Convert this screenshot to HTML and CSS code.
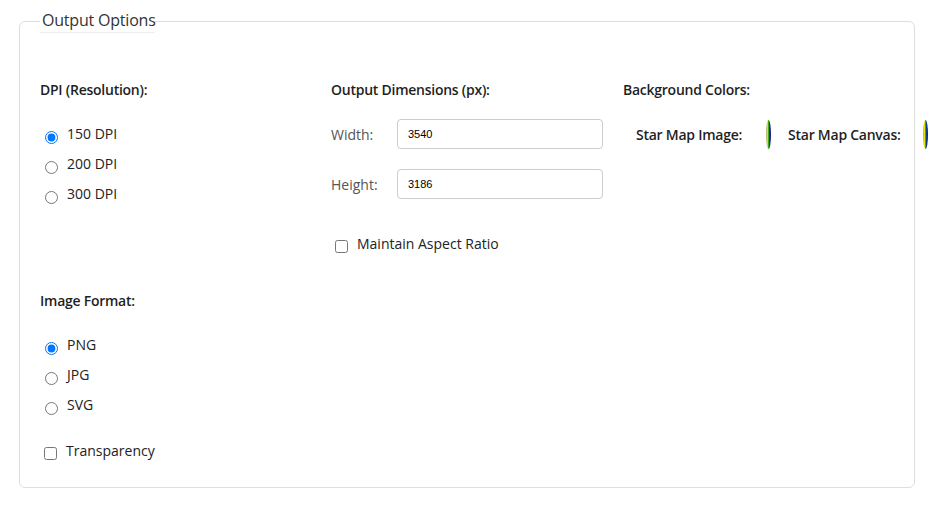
FILE: index.html
```html
<!DOCTYPE html>
<html>
<head>
<meta charset="utf-8">
<link rel="stylesheet" href="styles.css">
</head>
<body>
<div class="page">
  <fieldset class="options">
    <legend class="legend">Output Options</legend>
    <div class="cols">
      <div class="col">
        <div class="section">
          <div class="heading">DPI (Resolution):</div>
          <label class="opt"><input type="radio" name="dpi" class="radio" checked>150 DPI</label>
          <label class="opt"><input type="radio" name="dpi" class="radio">200 DPI</label>
          <label class="opt"><input type="radio" name="dpi" class="radio">300 DPI</label>
        </div>
        <div class="section format">
          <div class="heading">Image Format:</div>
          <label class="opt"><input type="radio" name="fmt" class="radio" checked>PNG</label>
          <label class="opt"><input type="radio" name="fmt" class="radio">JPG</label>
          <label class="opt"><input type="radio" name="fmt" class="radio">SVG</label>
          <label class="opt transp"><input type="checkbox" class="check">Transparency</label>
        </div>
      </div>
      <div class="col">
        <div class="heading">Output Dimensions (px):</div>
        <div class="dim first">
          <span class="dim-label">Width:</span>
          <input class="dim-input" type="text" value="3540">
        </div>
        <div class="dim">
          <span class="dim-label">Height:</span>
          <input class="dim-input" type="text" value="3186">
        </div>
        <label class="opt aspect"><input type="checkbox" class="check">Maintain Aspect Ratio</label>
      </div>
      <div class="col">
        <div class="heading">Background Colors:</div>
        <div class="colors">
          <span class="color-label">Star Map Image:</span>
          <span class="swatch"></span>
          <span class="color-label second">Star Map Canvas:</span>
          <span class="swatch"></span>
        </div>
      </div>
    </div>
  </fieldset>
</div>
</body>
</html>
```
FILE: styles.css
```css
html, body {
  margin: 0;
  padding: 0;
  background: #fff;
}
body {
  font-family: "Open Sans", "DejaVu Sans", sans-serif;
  font-size: 14px;
  color: #222;
}
.page {
  padding: 10px 0 0 19px;
  width: 896px;
}
.options {
  margin: 0;
  border: 1px solid #dedede;
  border-radius: 6px;
  padding: 47px 0 26px 20px;
  min-width: 0;
}
.legend {
  padding: 0 2px;
  width: 111px;
  white-space: nowrap;
  font-size: 16px;
  letter-spacing: -0.2px;
  line-height: 20px;
  padding-bottom: 2px;
  color: #333;
  border-bottom: 1px solid #eee;
}
.cols {
  display: grid;
  grid-template-columns: 291px 292px 291px;
}
.col {
  display: flex;
  flex-direction: column;
  align-items: flex-start;
}
.heading {
  font-weight: 600;
  letter-spacing: -0.25px;
  line-height: 20px;
  color: #1f1f1f;
  margin-bottom: 24px;
}
.opt {
  display: flex;
  align-items: center;
  height: 20px;
  line-height: 20px;
  margin-bottom: 10px;
  color: #222;
}
.section.format {
  margin-top: 77px;
}
.radio {
  width: 13px;
  height: 13px;
  margin: 6px 9px 0 5px;
}
.check {
  width: 13px;
  height: 13px;
  margin: 4px 9px 0 4px;
}
.transp {
  margin-top: 26px;
  margin-bottom: 0;
}
.dim {
  display: flex;
  align-items: center;
  height: 30px;
  margin-top: 20px;
}
.dim.first {
  margin-top: -5px;
}
.dim-label {
  width: 66px;
  color: #555;
}
.dim-input {
  box-sizing: border-box;
  width: 206px;
  height: 30px;
  border: 1px solid #ccc;
  border-radius: 4px;
  padding: 0 10px;
  font-family: "Liberation Sans", Arial, sans-serif;
  font-size: 11px;
  color: #000;
  background: #fff;
}
.aspect {
  margin-top: 35px;
}
.colors {
  display: flex;
  align-items: center;
  height: 30px;
  margin-top: -5px;
  padding-left: 13px;
  white-space: nowrap;
}
.color-label {
  font-weight: 600;
  letter-spacing: -0.25px;
  color: #1f1f1f;
  margin-right: 24px;
}
.color-label.second {
  margin-left: 17px;
  margin-right: 22px;
}
.swatch {
  display: block;
  width: 5px;
  height: 29px;
  border-radius: 50%;
  background: linear-gradient(to right, #9aa890 0, #e8e000 30%, #1a9a20 55%, #0000d8 80%, #303070 100%);
  flex: none;
}
```
